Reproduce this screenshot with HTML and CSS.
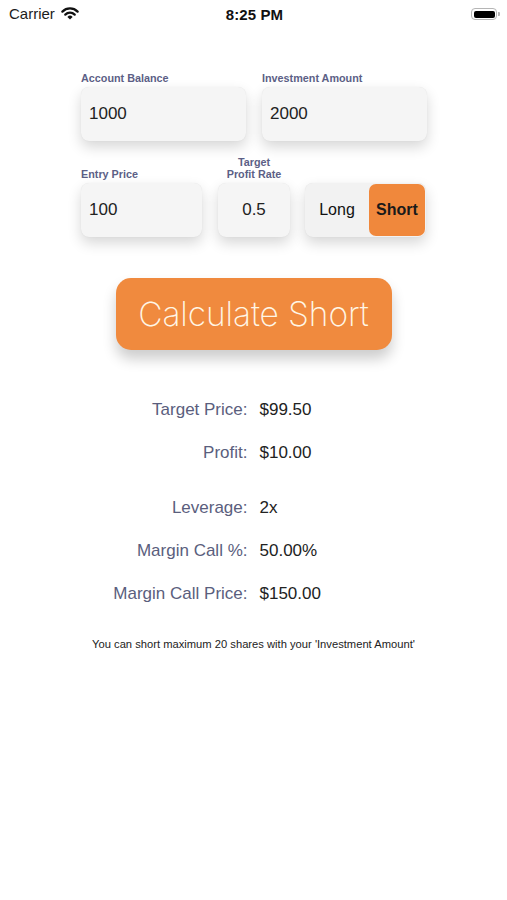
FILE: index.html
```html
<!DOCTYPE html>
<html lang="en">
<head>
<meta charset="utf-8">
<title>Short Calculator</title>
<link rel="stylesheet" href="styles.css">
</head>
<body>
<div class="screen">
  <header class="status-bar">
    <div class="status-left">
      <span class="carrier">Carrier</span>
      <svg class="wifi" width="18" height="13" viewBox="0 0 18 13" aria-hidden="true">
        <path d="M9 12.6 L6.4 9.9 A3.7 3.7 0 0 1 11.6 9.9 Z" fill="#111"/>
        <path d="M4.3 7.6 A6.7 6.7 0 0 1 13.7 7.6" stroke="#111" stroke-width="2.3" fill="none" stroke-linecap="round"/>
        <path d="M1.4 4.6 A10.8 10.8 0 0 1 16.6 4.6" stroke="#111" stroke-width="2.3" fill="none" stroke-linecap="round"/>
      </svg>
    </div>
    <div class="status-time">8:25 PM</div>
    <div class="status-right">
      <div class="battery"><div class="battery-fill"></div></div>
      <div class="battery-nub"></div>
    </div>
  </header>

  <main class="form">
    <div class="row row-top">
      <div class="field">
        <label class="field-label">Account Balance</label>
        <div class="input">1000</div>
      </div>
      <div class="field">
        <label class="field-label">Investment Amount</label>
        <div class="input">2000</div>
      </div>
    </div>

    <div class="row row-bottom">
      <div class="field">
        <label class="field-label">Entry Price</label>
        <div class="input">100</div>
      </div>
      <div class="field">
        <label class="field-label center">Target<br>Profit Rate</label>
        <div class="input input-center">0.5</div>
      </div>
      <div class="field">
        <div class="field-label"></div>
        <div class="segmented">
          <div class="segment">Long</div>
          <div class="segment selected">Short</div>
        </div>
      </div>
    </div>
  </main>

  <button class="calc-btn">Calculate Short</button>

  <section class="results">
    <div class="res-label">Target Price:</div><div class="res-value">$99.50</div>
    <div class="res-label">Profit:</div><div class="res-value">$10.00</div>
    <div class="res-label spaced">Leverage:</div><div class="res-value spaced">2x</div>
    <div class="res-label">Margin Call %:</div><div class="res-value">50.00%</div>
    <div class="res-label">Margin Call Price:</div><div class="res-value">$150.00</div>
  </section>

  <p class="note">You can short maximum 20 shares with your 'Investment Amount'</p>
</div>
</body>
</html>
```
FILE: styles.css
```css
* { box-sizing: border-box; }

html, body {
  margin: 0;
  padding: 0;
  background: #ffffff;
}

body {
  font-family: "Liberation Sans", Arial, sans-serif;
  color: #222222;
}

.screen {
  width: 507px;
  min-height: 900px;
  background: #ffffff;
}

/* Status bar */
.status-bar {
  height: 28px;
  display: grid;
  grid-template-columns: 1fr auto 1fr;
  align-items: center;
  padding: 0 7px 0 9px;
}

.status-left {
  display: flex;
  align-items: center;
  gap: 6px;
}

.carrier {
  font-size: 15px;
  color: #1c1c1c;
  line-height: 18px;
}

.wifi { display: block; margin-top: -1px; }

.status-time {
  font-size: 15px;
  font-weight: bold;
  color: #111;
  letter-spacing: 0.1px;
}

.status-right {
  display: flex;
  justify-content: flex-end;
  align-items: center;
  gap: 1px;
}

.battery {
  width: 26px;
  height: 12px;
  border: 1px solid #b5b5b5;
  border-radius: 4px;
  padding: 1.5px;
}

.battery-fill {
  width: 100%;
  height: 100%;
  background: #000;
  border-radius: 2px;
}

.battery-nub {
  width: 2px;
  height: 4px;
  background: #b5b5b5;
  border-radius: 0 1px 1px 0;
}

/* Form */
.form {
  margin: 44px 0 0 81px;
  width: 346px;
}

.row {
  display: grid;
  align-items: end;
}

.row-top {
  grid-template-columns: 165px 165px;
  column-gap: 16px;
}

.row-bottom {
  margin-top: 15px;
  grid-template-columns: 121px 72px 120px;
  column-gap: 16px;
}

.row-bottom .field:last-child { margin-left: -1px; }

.field {
  display: flex;
  flex-direction: column;
}

.field-label {
  font-size: 10.8px;
  font-weight: bold;
  color: #5c5f86;
  line-height: 12.5px;
  margin-bottom: 2px;
}

.field-label.center { text-align: center; }

.input {
  height: 54px;
  background: #f5f5f5;
  border-radius: 8px;
  box-shadow: 0 6px 14px rgba(0, 0, 0, 0.16), 0 0 1px rgba(0, 0, 0, 0.1);
  font-size: 17px;
  color: #222;
  display: flex;
  align-items: center;
  padding-left: 8px;
}

.input-center {
  justify-content: center;
  padding-left: 0;
}

.segmented {
  height: 54px;
  margin-top: 1px;
  background: #f2f2f2;
  border-radius: 8px;
  box-shadow: 0 6px 14px rgba(0, 0, 0, 0.16), 0 0 1px rgba(0, 0, 0, 0.1);
  display: grid;
  grid-template-columns: 64px 1fr;
  padding: 1px 1px 1px 0;
}

.segment {
  display: flex;
  align-items: center;
  justify-content: center;
  font-size: 16px;
  color: #111;
  border-radius: 7px;
}

.segment.selected {
  background: #f0883c;
  font-weight: bold;
  color: #1a1a1a;
}

/* Button */
.calc-btn {
  display: block;
  margin: 41px auto 0;
  width: 276px;
  height: 72px;
  border: none;
  border-radius: 15px;
  background: #f08a3e;
  color: #fff6e6;
  font-family: "Inter", "Liberation Sans", sans-serif;
  font-weight: 200;
  font-size: 33.5px;
  letter-spacing: -0.1px;
  box-shadow: 0 9px 14px rgba(0, 0, 0, 0.2);
  padding: 0;
}

/* Results */
.results {
  margin-top: 49px;
  display: grid;
  grid-template-columns: 1fr 1fr;
  column-gap: 12px;
  row-gap: 22px;
  font-size: 17px;
  line-height: 21px;
}

.res-label {
  text-align: right;
  color: #5a5e7d;
}

.res-value {
  color: #222;
}

.spaced { margin-top: 12px; }

.note {
  margin: 33px 0 0;
  text-align: center;
  font-size: 11.2px;
  line-height: 14px;
  color: #222;
}
```
